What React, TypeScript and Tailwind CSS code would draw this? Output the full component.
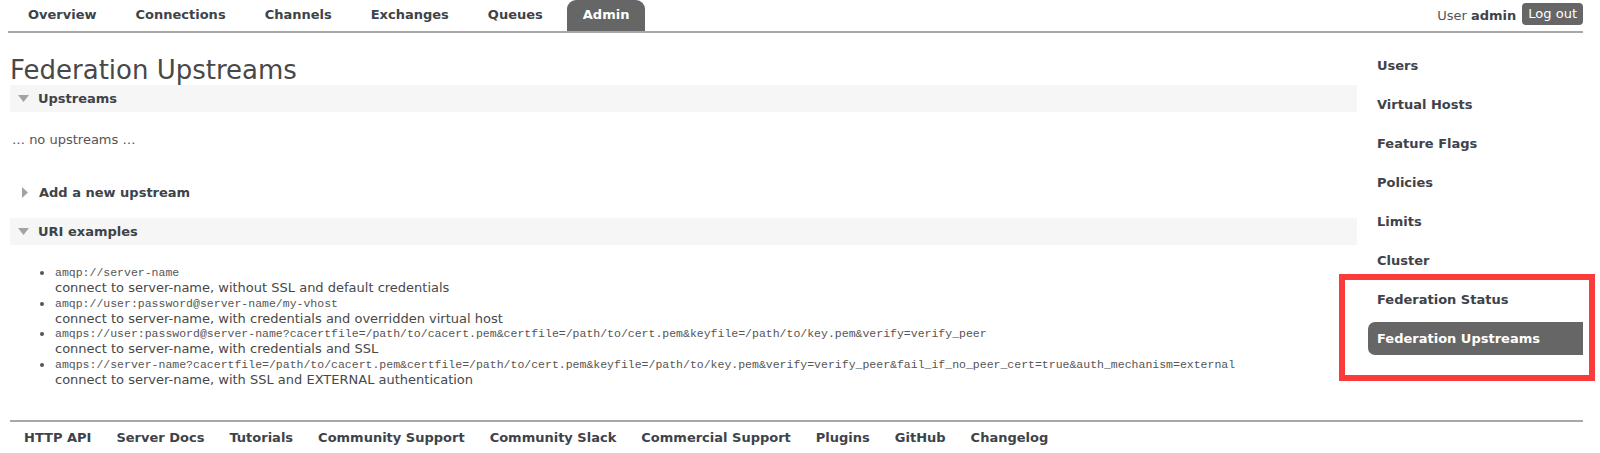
import type { ReactNode } from 'react';

const tabs = ['Overview', 'Connections', 'Channels', 'Exchanges', 'Queues', 'Admin'];

const adminLinks = [
  'Users',
  'Virtual Hosts',
  'Feature Flags',
  'Policies',
  'Limits',
  'Cluster',
  'Federation Status',
  'Federation Upstreams',
];

const uriExamples = [
  {
    uri: 'amqp://server-name',
    note: 'connect to server-name, without SSL and default credentials',
  },
  {
    uri: 'amqp://user:password@server-name/my-vhost',
    note: 'connect to server-name, with credentials and overridden virtual host',
  },
  {
    uri: 'amqps://user:password@server-name?cacertfile=/path/to/cacert.pem&certfile=/path/to/cert.pem&keyfile=/path/to/key.pem&verify=verify_peer',
    note: 'connect to server-name, with credentials and SSL',
  },
  {
    uri: 'amqps://server-name?cacertfile=/path/to/cacert.pem&certfile=/path/to/cert.pem&keyfile=/path/to/key.pem&verify=verify_peer&fail_if_no_peer_cert=true&auth_mechanism=external',
    note: 'connect to server-name, with SSL and EXTERNAL authentication',
  },
];

const footerLinks = [
  'HTTP API',
  'Server Docs',
  'Tutorials',
  'Community Support',
  'Community Slack',
  'Commercial Support',
  'Plugins',
  'GitHub',
  'Changelog',
];

function ArrowDown() {
  return (
    <svg width="11" height="7" viewBox="0 0 11 7" className="shrink-0">
      <polygon points="0,0 11,0 5.5,7" fill="#a3a3a3" />
    </svg>
  );
}

function ArrowRight() {
  return (
    <svg width="6" height="11" viewBox="0 0 6 11" className="shrink-0">
      <polygon points="0,0 6,5.5 0,11" fill="#a3a3a3" />
    </svg>
  );
}

function SectionHeader({ open, children }: { open: boolean; children: ReactNode }) {
  return (
    <div
      className={`flex h-[27px] items-center ${
        open ? 'gap-[9px] bg-[#f5f6f5] pl-[8px]' : 'gap-[11px] pl-[12px]'
      }`}
    >
      {open ? <ArrowDown /> : <ArrowRight />}
      <span className="text-[13px] font-bold text-[#3e434a]">{children}</span>
    </div>
  );
}

export default function App() {
  return (
    <div className="relative min-h-[453px] bg-white font-['DejaVu_Sans',Verdana,sans-serif] text-[13px] text-[#484848]">
      <div className="ml-2 w-[1575px]">
        {/* top navigation */}
        <header className="flex h-[33px] items-end justify-between border-b-2 border-[#a8a8a8]">
          <nav className="ml-[4px] flex h-[31px] gap-[7px]">
            {tabs.map((tab) => (
              <a
                key={tab}
                className={`flex h-full items-center rounded-t-[9px] px-4 pb-[2px] font-bold ${
                  tab === 'Admin' ? 'ml-[1px] bg-[#666666] text-white' : 'text-[#3e434a]'
                }`}
              >
                {tab}
              </a>
            ))}
          </nav>
          <div className="flex h-full items-start gap-[6px] pt-[3px]">
            <span className="pt-[3px] text-[#555]">
              User <b className="text-[#3e434a]">admin</b>
            </span>
            <button className="h-[22px] rounded-[4px] bg-[#666666] px-[6px] text-white">Log out</button>
          </div>
        </header>

        <div className="flex">
          {/* main column */}
          <main className="min-w-0 flex-1 pl-[2px] pr-[11px]">
            <h1 className="mt-[22px] text-[26px] leading-[30px] font-normal text-[#484848]">Federation Upstreams</h1>
            <SectionHeader open>Upstreams</SectionHeader>
            <p className="mt-[20px] pl-[2px] leading-[16px] text-[#555]">… no upstreams …</p>
            <div className="mt-[31px]">
              <SectionHeader open={false}>Add a new upstream</SectionHeader>
            </div>
            <div className="mt-[12px]">
              <SectionHeader open>URI examples</SectionHeader>
            </div>
            <ul className="mt-[20px] pl-[28px]">
              {uriExamples.map((ex) => (
                <li key={ex.uri} className="flex">
                  <span className="w-[17px] shrink-0 pl-[2px] pt-[6px]">
                    <span className="block h-[4px] w-[4px] rounded-full bg-[#555]" />
                  </span>
                  <div>
                    <div className="font-['Liberation_Mono',monospace] text-[11.5px] leading-[15px] whitespace-nowrap text-[#555]">
                      {ex.uri}
                    </div>
                    <div className="text-[13px] leading-[15.7px] text-[#484848]">{ex.note}</div>
                  </div>
                </li>
              ))}
            </ul>
          </main>

          {/* admin side menu */}
          <aside className="flex w-[215px] shrink-0 flex-col gap-[6px] pt-[16px]">
            {adminLinks.map((link) => (
              <a
                key={link}
                className={`flex h-[33px] items-center rounded-l-[7px] px-[9px] font-bold ${
                  link === 'Federation Upstreams' ? 'bg-[#666666] text-white' : 'text-[#3e434a]'
                }`}
              >
                {link}
              </a>
            ))}
          </aside>
        </div>

        {/* footer links */}
        <footer className="mt-[32px] ml-[2px] border-t-2 border-[#a8a8a8] pt-[8px]">
          <div className="flex gap-[25px] pl-[14px] font-bold leading-[16px] text-[#3e434a]">
            {footerLinks.map((link) => (
              <a key={link}>{link}</a>
            ))}
          </div>
        </footer>
      </div>

      {/* highlight frame around the federation entries */}
      <div className="pointer-events-none absolute top-[274px] left-[1339px] h-[107px] w-[256px] border-[6px] border-[#fb3a3a]" />
    </div>
  );
}
